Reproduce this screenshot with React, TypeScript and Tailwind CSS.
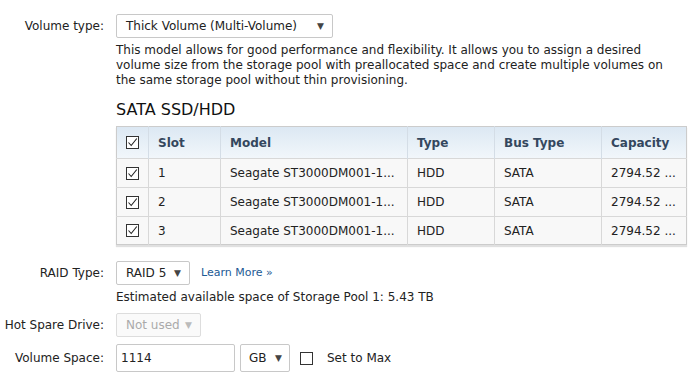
import React from 'react';

const Check = ({ checked = true }: { checked?: boolean }) => (
  <svg width="13" height="13" viewBox="0 0 13 13" className="block">
    <rect x="0.5" y="0.5" width="12" height="12" fill="white" stroke="#333" strokeWidth="1" />
    {checked && <path d="M2.5 6.5 L5.2 9.5 L10.8 2.5" fill="none" stroke="#222" strokeWidth="1.1" />}
  </svg>
);

const Arrow = ({ muted = false }: { muted?: boolean }) => (
  <span className={`text-[9px] leading-none ${muted ? 'text-[#bbb]' : 'text-[#444]'}`}>▼</span>
);

const Select = ({ value, width, muted = false }: { value: string; width: string; muted?: boolean }) => (
  <div
    className={`${width} h-6 flex items-center justify-between pl-[9px] pr-[8px] border rounded-[2px] ${
      muted ? 'border-[#ddd] bg-[#fafafa] text-[#aaa]' : 'border-[#c8c8c8] bg-white text-[#222]'
    }`}
  >
    <span>{value}</span>
    <Arrow muted={muted} />
  </div>
);

const drives = [
  { slot: '1', model: 'Seagate ST3000DM001-1...', type: 'HDD', bus: 'SATA', cap: '2794.52 ...' },
  { slot: '2', model: 'Seagate ST3000DM001-1...', type: 'HDD', bus: 'SATA', cap: '2794.52 ...' },
  { slot: '3', model: 'Seagate ST3000DM001-1...', type: 'HDD', bus: 'SATA', cap: '2794.52 ...' },
];

export default function App() {
  return (
    <div className="w-[690px] h-[374px] overflow-hidden bg-white text-[12px] text-[#222] font-['DejaVu_Sans',Verdana,sans-serif] pt-[14px]">
      <div className="grid grid-cols-[104px_1fr] gap-x-3 items-start">
        {/* volume type */}
        <div className="h-6 flex items-center justify-end">Volume type:</div>
        <div>
          <Select value="Thick Volume (Multi-Volume)" width="w-[217px]" />
          <p className="mt-[5px] leading-[15px] w-[560px]">
            This model allows for good performance and flexibility. It allows you to assign a desired volume size from the storage pool with preallocated space and create multiple volumes on the same storage pool without thin provisioning.
          </p>
          <h2 className="text-[16px] leading-[20px] mt-[12px] mb-[6px] text-[#111]">SATA SSD/HDD</h2>
          <table className="w-[570px] border-collapse table-fixed border border-[#ccc] shadow-[0_2px_1px_rgba(0,0,0,0.12)]">
            <colgroup>
              <col className="w-[32px]" />
              <col className="w-[72px]" />
              <col className="w-[187px]" />
              <col className="w-[87px]" />
              <col className="w-[107px]" />
              <col className="w-[85px]" />
            </colgroup>
            <thead>
              <tr className="h-[32px] bg-gradient-to-b from-[#dce8f3] to-[#f2f7fb] text-[#34475e] font-bold text-left">
                <th className="border-r border-[#d4dde6] px-0">
                  <div className="flex justify-center"><Check /></div>
                </th>
                <th className="border-r border-[#d4dde6] pl-[9px]">Slot</th>
                <th className="border-r border-[#d4dde6] pl-[9px]">Model</th>
                <th className="border-r border-[#d4dde6] pl-[9px]">Type</th>
                <th className="border-r border-[#d4dde6] pl-[9px]">Bus Type</th>
                <th className="pl-[9px]">Capacity</th>
              </tr>
            </thead>
            <tbody>
              {drives.map((d, i) => (
                <tr key={d.slot} className={`${i === 2 ? 'h-[28px]' : 'h-[29px]'} bg-[#f8f8f8] border-t border-[#d8d8d8]`}>
                  <td className="border-r border-[#d8d8d8]">
                    <div className="flex justify-center"><Check /></div>
                  </td>
                  <td className="border-r border-[#d8d8d8] pl-[9px]">{d.slot}</td>
                  <td className="border-r border-[#d8d8d8] pl-[9px] whitespace-nowrap">{d.model}</td>
                  <td className="border-r border-[#d8d8d8] pl-[9px]">{d.type}</td>
                  <td className="border-r border-[#d8d8d8] pl-[9px]">{d.bus}</td>
                  <td className="pl-[9px] whitespace-nowrap">{d.cap}</td>
                </tr>
              ))}
            </tbody>
          </table>
        </div>

        {/* raid type */}
        <div className="h-6 flex items-center justify-end mt-[16px]">RAID Type:</div>
        <div className="mt-[16px]">
          <div className="flex items-center gap-[11px]">
            <Select value="RAID 5" width="w-[74px]" />
            <a className="text-[11px] text-[#1d5a94]">Learn More »</a>
          </div>
          <p className="mt-[5px] leading-[15px]">Estimated available space of Storage Pool 1: 5.43 TB</p>
        </div>

        {/* hot spare */}
        <div className="h-6 flex items-center justify-end mt-[8px]">Hot Spare Drive:</div>
        <div className="mt-[8px]">
          <Select value="Not used" width="w-[85px]" muted />
        </div>

        {/* volume space */}
        <div className="h-7 flex items-center justify-end mt-[7px]">Volume Space:</div>
        <div className="mt-[7px] flex items-center">
          <div className="w-[119px] h-7 border border-[#c8c8c8] rounded-[2px] flex items-center pl-[4px]">1114</div>
          <div className="ml-[5px] w-[50px] h-7 border border-[#c8c8c8] rounded-[2px] flex items-center justify-between pl-[8px] pr-[7px]">
            <span>GB</span>
            <Arrow />
          </div>
          <div className="ml-[10px]"><Check checked={false} /></div>
          <span className="ml-[14px]">Set to Max</span>
        </div>
      </div>
    </div>
  );
}
